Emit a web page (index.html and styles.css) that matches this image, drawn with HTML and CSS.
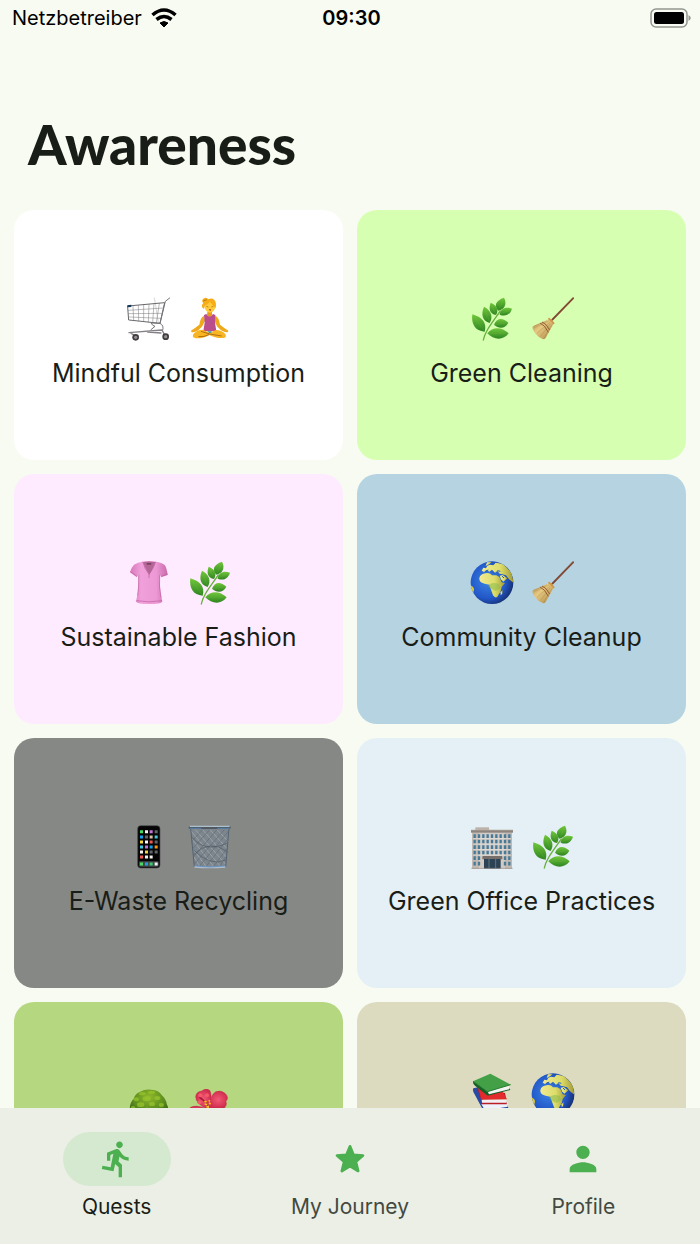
FILE: index.html
```html
<!DOCTYPE html>
<html lang="en">
<head>
	<meta charset="utf-8">
	<meta name="viewport" content="width=device-width, initial-scale=1">
	<title>Awareness</title>
	<link rel="stylesheet" href="styles.css">
</head>
<body>

	<!-- Pictograms shared by several cards -->
	<svg class="sprite" aria-hidden="true">
		<defs>
			<linearGradient id="leafFill" x1="0" y1="0" x2="0" y2="1">
				<stop offset="0" stop-color="#73c83c"/>
				<stop offset="1" stop-color="#2d8420"/>
			</linearGradient>
			<linearGradient id="strawFill" x1="0" y1="0" x2="1" y2="1">
				<stop offset="0" stop-color="#a98343"/>
				<stop offset=".4" stop-color="#e6c982"/>
				<stop offset="1" stop-color="#a9833f"/>
			</linearGradient>
			<radialGradient id="seaFill" cx=".4" cy=".45" r=".6">
				<stop offset="0" stop-color="#3b86e4"/>
				<stop offset=".7" stop-color="#2257c8"/>
				<stop offset="1" stop-color="#173277"/>
			</radialGradient>
			<linearGradient id="landFill" x1="0" y1="0" x2="1" y2="0">
				<stop offset="0" stop-color="#f2ea93"/>
				<stop offset=".6" stop-color="#dcdc69"/>
				<stop offset="1" stop-color="#a19c35"/>
			</linearGradient>
			<linearGradient id="shirtFill" x1="0" y1="0" x2="1" y2="0">
				<stop offset="0" stop-color="#d777bb"/>
				<stop offset=".3" stop-color="#f0a0da"/>
				<stop offset=".7" stop-color="#ec98d4"/>
				<stop offset="1" stop-color="#c869ab"/>
			</linearGradient>
			<radialGradient id="treeFill" cx=".5" cy=".25" r=".7">
				<stop offset="0" stop-color="#8fb92b"/>
				<stop offset=".6" stop-color="#5a8c1d"/>
				<stop offset="1" stop-color="#2c5611"/>
			</radialGradient>
			<radialGradient id="petalFill">
				<stop offset="0" stop-color="#f05a74"/>
				<stop offset="1" stop-color="#d32d50"/>
			</radialGradient>

			<symbol id="herb" viewBox="0 0 132 132">
				<path d="M40 129C44 105 63 82 91 42" fill="none" stroke="#69af3c" stroke-width="4" stroke-linecap="round"/>
				<g fill="url(#leafFill)">
					<path d="M85 41C70 25 78 10 102 2C112 20 104 37 85 41Z"/>
					<path d="M89 53C91 34 107 28 126 35C121 52 107 60 89 53Z"/>
					<path d="M78 54C59 50 55 35 62 17C80 24 88 38 78 54Z"/>
					<path d="M59 78C37 72 32 52 42 29C64 40 70 60 59 78Z"/>
					<path d="M44 104C15 103 3 80 7 52C35 60 52 77 44 104Z"/>
					<path d="M72 83C80 61 99 61 115 77C106 95 87 97 72 83Z"/>
					<path d="M52 109C69 87 96 90 116 109C99 132 71 129 52 109Z"/>
				</g>
				<path d="M85 41L99 12M89 53L117 39M78 54L66 27M59 78L46 40M44 104L15 62M72 83L106 78M52 109L106 108" stroke="#9bd65b" stroke-width="1" opacity=".4"/>
			</symbol>

			<symbol id="broom" viewBox="0 0 132 132">
				<path d="M62 70L126 4" stroke="#7d4530" stroke-width="6" stroke-linecap="round"/>
				<path d="M74 57L126 3" stroke="#a7664a" stroke-width="1"/>
				<path d="M56 66Q62 64 68 75Q69 82 62 91L44 123Q39 130 31 124Q13 116 4 93Q3 88 12 85L43 71Q49 68 56 66Z" fill="url(#strawFill)"/>
				<path d="M33 75Q46 79 56 99M27 78Q41 83 52 106" fill="none" stroke="#965b34" stroke-width="3"/>
				<path d="M54 72L10 92M57 76L18 108M58 80L28 119M63 82L38 125M48 72L7 88" stroke="#8b6b32" stroke-width="1" opacity=".7"/>
				<path d="M54 65L68 79" stroke="#cf9546" stroke-width="5" stroke-linecap="round"/>
			</symbol>

			<symbol id="globe" viewBox="0 0 132 132">
				<clipPath id="globeClip"><circle cx="66" cy="65" r="64"/></clipPath>
				<circle cx="66" cy="65" r="64" fill="url(#seaFill)"/>
				<g clip-path="url(#globeClip)" fill="url(#landFill)">
					<path d="M28 55Q27 45 38 39Q53 34 61 38L66 43L79 43L88 48L95 64L105 66L95 78L92 91L82 107Q76 113 69 103L63 86L58 71L44 68Q30 66 28 55Z"/>
					<path d="M89 44L98 42L112 52L100 62L93 55Z"/>
					<path d="M35 29L40 20L48 22L52 14L60 11L70 13L77 5L100 9L126 36L130 65L117 55L108 43L97 40L89 38L82 30L75 35L66 26L58 32L50 27L42 33Z"/>
					<path d="M51 4L65 3L58 9L47 15Z"/>
					<path d="M92 94L98 87L97 98L92 103Z"/>
					<path d="M0 72Q12 77 12 86L9 98L2 92Z" fill="#dfca32"/>
				</g>
				<path d="M54 75Q63 61 86 68L91 82L77 90L63 83Z" fill="#82b94a" opacity=".5"/>
				<path d="M46 31L55 27M64 31L73 38M82 29L91 31M96 45L102 51" stroke="#2560be" stroke-width="3"/>
			</symbol>
		</defs>
	</svg>

	<header class="status-bar">
		<div class="carrier">
			<span>Netzbetreiber</span>
			<svg class="wifi" viewBox="0 0 26 20" aria-hidden="true">
				<path d="M13 19L9 15Q13 12 17 15Z" stroke="#000"/>
				<path d="M1.5 7Q13-3 24.5 7M5.5 11.5Q13 5.5 20.5 11.5" fill="none" stroke="#000" stroke-width="3.6"/>
			</svg>
		</div>
		<time>09:30</time>
		<svg class="battery" viewBox="0 0 41 20" aria-hidden="true">
			<rect x="1" y="1" width="36" height="18" rx="5" fill="none" stroke="#929690" stroke-width="1.5"/>
			<rect x="4" y="4" width="30" height="12" rx="2.5"/>
			<path d="M38.5 7Q43 10 38.5 13Z" fill="#929690"/>
		</svg>
	</header>

	<main>
		<h1>Awareness</h1>

		<div class="quests">
			<a class="card mindful" href="#mindful">
				<div class="pictograms">
					<svg viewBox="0 0 132 132" aria-hidden="true">
						<g fill="none" stroke-linecap="round" stroke-linejoin="round">
							<path d="M3 27L113 17L99 79L6 69Z" stroke="#68666a" stroke-width="3"/>
							<path d="M18 26L20 70M34 25L35 72M50 23L50 74M66 22L64 76M81 20L77 77M97 19L88 78M4 40L109 33M5 50L107 49M6 60L103 64" stroke="#77757a" stroke-width="1.5"/>
							<path d="M82 3L85 19L94 77" stroke="#858287" stroke-width="1"/>
							<path d="M128 3L115 13L99 79L72 78Q77 87 84 88L72 98M99 79Q112 85 107 100" stroke="#77737a" stroke-width="3"/>
							<path d="M6 107L105 99L112 112M12 109L28 118M62 105L102 108" stroke="#848087" stroke-width="4"/>
						</g>
						<circle cx="26" cy="121" r="10" fill="#3f3b3e"/>
						<circle cx="116" cy="119" r="10" fill="#3f3b3e"/>
						<circle cx="26" cy="121" r="5" fill="#938f92"/>
						<circle cx="116" cy="119" r="5" fill="#938f92"/>
						<path d="M1 25L13 23L13 30L2 31Z" fill="#173958"/>
					</svg>
					<svg viewBox="0 0 132 132" aria-hidden="true">
						<path d="M48 56Q37 61 34 83L16 97Q7 100 10 105Q25 109 43 88L51 71Z" fill="#efa91d"/>
						<path d="M82 56Q93 61 96 83L114 97Q123 100 120 105Q105 109 87 88L79 71Z" fill="#efa91d"/>
						<path d="M59 40H72V54L65 64L57 54Z" fill="#e79a1b"/>
						<path d="M48 54L55 51Q64 67 75 51L82 54L81 77L85 102H46L50 77Z" fill="#ba4d8c"/>
						<ellipse cx="66" cy="26" rx="17" ry="21" fill="#ffcb3b"/>
						<path d="M48 36Q36 28 46 19Q38 9 49 3Q56 0 61 7Q77-1 83 16Q85 28 82 33Q74 25 66 14Q58 24 50 26Z" fill="#f6ad17"/>
						<path d="M45 12L57 8M55 28L61 30M70 30L76 28" stroke="#9d651b" stroke-width="2"/>
						<path d="M62 38Q66 36 70 38L67 41Z" fill="#8c261b"/>
						<path d="M44 98Q28 98 19 108Q8 120 23 124Q47 125 64 114Q83 125 108 123Q120 119 108 107Q98 98 84 99L65 107Z" fill="#f8b523"/>
						<path d="M39 103L65 111L101 117M65 112Q48 121 31 119" fill="none" stroke="#b27013" stroke-width="3"/>
						<path d="M57 103H73L66 109Z" fill="#2d8fad"/>
					</svg>
				</div>
				<h2>Mindful Consumption</h2>
			</a>

			<a class="card cleaning" href="#cleaning">
				<div class="pictograms">
					<svg aria-hidden="true"><use href="#herb"/></svg>
					<svg aria-hidden="true"><use href="#broom"/></svg>
				</div>
				<h2>Green Cleaning</h2>
			</a>

			<a class="card fashion" href="#fashion">
				<div class="pictograms">
					<svg viewBox="0 0 132 132" aria-hidden="true">
						<path d="M47 2Q66-2 86 2Q105 5 113 12Q119 20 122 42L103 49L99 42Q96 83 106 122Q102 129 67 129Q31 129 27 122Q37 83 34 42L29 49L9 34Q13 19 21 11Q32 4 47 2Z" fill="url(#shirtFill)"/>
						<path d="M48 3Q66 0 85 3Q79 22 67 41Q54 22 48 3Z" fill="#b36796"/>
						<path d="M47 2Q53 24 66 40V51M86 2Q80 23 66 40M10 32L30 46M122 39L102 46M28 119Q65 126 105 119M35 43Q36 77 32 104M98 43Q95 78 102 109" fill="none" stroke="#bd5d9f" stroke-width="2"/>
						<rect x="59" y="6" width="14" height="5" rx="1" fill="#7b4162"/>
					</svg>
					<svg aria-hidden="true"><use href="#herb"/></svg>
				</div>
				<h2>Sustainable Fashion</h2>
			</a>

			<a class="card community" href="#community">
				<div class="pictograms">
					<svg aria-hidden="true"><use href="#globe"/></svg>
					<svg aria-hidden="true"><use href="#broom"/></svg>
				</div>
				<h2>Community Cleanup</h2>
			</a>

			<a class="card e-waste" href="#e-waste">
				<div class="pictograms">
					<svg viewBox="0 0 132 132" aria-hidden="true">
						<rect x="32" y="2" width="67" height="127" rx="9" fill="#050506" stroke="#4c4c4d" stroke-width="2"/>
						<rect x="36" y="109" width="59" height="16" rx="4" fill="#454b4c"/>
						<g stroke-width="9" fill="none">
							<path d="M39 20h9M39 117h9" stroke="#49db62"/>
							<path d="M54 20h9M39 81h9M54 96h9M68 96h9M83 117h9" stroke="#f5f1f1"/>
							<path d="M68 20h9M54 66h9" stroke="#c873dd"/>
							<path d="M83 20h9M83 51h9M83 81h9M54 36h9M68 81h9" stroke="#606568"/>
							<path d="M39 36h9M68 66h9M54 117h9" stroke="#199fe8"/>
							<path d="M68 36h9" stroke="#d9bf9e"/>
							<path d="M83 36h9M39 66h9" stroke="#43c8df"/>
							<path d="M39 51h9M54 81h9" stroke="#f2d642"/>
							<path d="M54 51h9" stroke="#fff"/>
							<path d="M68 51h9M39 96h9" stroke="#ee5850"/>
							<path d="M83 66h9" stroke="#ff9800"/>
							<path d="M68 117h9" stroke="#39c873"/>
						</g>
					</svg>
					<svg viewBox="0 0 132 132" aria-hidden="true">
						<path d="M8 10H123L113 127H19Z" fill="#7d858d"/>
						<g fill="none" stroke="#a9b0b8" stroke-width="2">
							<path d="M9 18L98 125M22 14L112 117M43 13L115 96M65 13L118 72M86 13L121 50M12 42L78 126M14 70L56 127M17 95L38 127"/>
							<path d="M122 18L33 125M109 14L19 117M88 13L16 96M66 13L13 72M45 13L10 50M119 42L53 126M117 70L75 127M114 95L93 127" stroke="#626a76"/>
						</g>
						<path d="M10 35Q50 85 116 55M17 89Q65 40 119 81M14 72Q66 127 114 105" fill="none" stroke="#505962" stroke-width="2"/>
						<path d="M8 10L19 126M123 10L113 126" stroke="#536473" stroke-width="3"/>
						<path d="M20 122Q65 128 112 122V128Q65 132 19 128Z" fill="#b1bcc8"/>
						<path d="M20 123Q65 129 112 123" fill="none" stroke="#4d8bd0" stroke-width="2"/>
						<rect x="2" y="3" width="126" height="9" rx="4" fill="#505962"/>
						<path d="M5 4H125" stroke="#c3d5e4" stroke-width="3"/>
						<path d="M5 10H40M88 10H125" stroke="#5f98d1" stroke-width="2"/>
					</svg>
				</div>
				<h2>E-Waste Recycling</h2>
			</a>

			<a class="card office" href="#office">
				<div class="pictograms">
					<svg viewBox="0 0 132 132" aria-hidden="true">
						<rect x="16" y="7" width="41" height="10" fill="#bbb2aa"/>
						<rect x="6" y="20" width="120" height="111" fill="#d2cbc5"/>
						<path d="M6 24H27V131H6ZM105 24H126V131H105Z" fill="#c1b9b3"/>
						<rect x="3" y="15" width="126" height="8" fill="#8d847e"/>
						<path d="M3 15H129" stroke="#bcb3aa" stroke-width="2"/>
						<!-- one dash per window, one line per column -->
						<g stroke="#477998" stroke-width="7" stroke-dasharray="11 5.5">
							<path d="M14 28V122M27 28V122M40 28V94M53 28V94M66 28V94M79 28V94M92 28V94M105 28V122M118 28V122"/>
						</g>
						<path d="M10 41H122M10 57H122M10 74H122M10 90H122" stroke="#eee8e1" stroke-width="2"/>
						<rect x="37" y="93" width="60" height="10" rx="2" fill="#756e6a"/>
						<rect x="42" y="102" width="50" height="29" fill="#2b4354"/>
						<path d="M57 102V130M77 102V130" stroke="#7894a4" stroke-width="2"/>
						<path d="M4 130H128" stroke="#978d85" stroke-width="2"/>
					</svg>
					<svg aria-hidden="true"><use href="#herb"/></svg>
				</div>
				<h2>Green Office Practices</h2>
			</a>

			<a class="card garden" href="#garden" aria-label="Garden">
				<div class="pictograms">
					<svg viewBox="0 0 132 132" aria-hidden="true">
						<path d="M56 77H77L83 131H49Z" fill="#775032"/>
						<path d="M8 61Q9 39 20 29Q25 13 40 8Q56-2 79 3Q95 5 104 18Q118 31 119 45Q128 61 120 75Q108 93 86 88Q65 99 45 89Q21 93 11 77Z" fill="url(#treeFill)"/>
						<g fill="#9bc62d" opacity=".7">
							<ellipse cx="46" cy="14" rx="10" ry="5"/>
							<ellipse cx="74" cy="10" rx="11" ry="5"/>
							<ellipse cx="28" cy="31" rx="8" ry="6"/>
							<ellipse cx="59" cy="29" rx="12" ry="7"/>
							<ellipse cx="91" cy="27" rx="9" ry="6"/>
							<ellipse cx="41" cy="47" rx="11" ry="7"/>
							<ellipse cx="75" cy="45" rx="9" ry="6"/>
							<ellipse cx="103" cy="48" rx="8" ry="6"/>
							<ellipse cx="18" cy="56" rx="7" ry="5"/>
							<ellipse cx="60" cy="63" rx="11" ry="7"/>
						</g>
					</svg>
					<svg viewBox="0 0 132 132" aria-hidden="true">
						<g fill="url(#petalFill)" stroke="#b72442" stroke-width="1">
							<path d="M59 67Q24 96 5 76Q-5 64 6 56Q21 45 59 60Z"/>
							<path d="M56 60Q21 42 23 21Q26 7 41 6Q52-4 64 3Q71 10 69 34Z"/>
							<path d="M62 58Q66 18 83 8Q99 2 111 13Q125 25 114 37Q119 52 105 57Z"/>
							<path d="M63 61Q104 46 119 61Q127 77 116 92Q105 109 87 99Z"/>
							<path d="M61 65Q90 102 72 121Q56 132 42 118Q28 105 47 83Z"/>
						</g>
						<path d="M61 69L55 41L34 24" fill="none" stroke="#a91737" stroke-width="5"/>
						<path d="M49 37l7 2m6-5l4 3m-16 8l8 2m5-5l5 3m-13 8l8 1m-8 6l8-3" stroke="#f7c51d" stroke-width="5"/>
						<g fill="#f35b68">
							<circle cx="37" cy="19" r="6"/>
							<circle cx="57" cy="19" r="6"/>
							<circle cx="34" cy="40" r="6"/>
						</g>
					</svg>
				</div>
				<h2></h2>
			</a>

			<a class="card learning" href="#learning" aria-label="Learning">
				<div class="pictograms">
					<svg viewBox="0 0 132 132" aria-hidden="true">
						<path d="M10 46Q6 54 15 66L45 122L116 108L112 96L46 105L24 43Z" fill="#284aa4"/>
						<path d="M34 94L113 88V101L46 113Z" fill="#edf2fd"/>
						<path d="M25 42Q22 53 29 66L37 94L111 94L109 87L37 84L37 76L109 78L105 60Z" fill="#bb1f26"/>
						<path d="M35 80H109V89H36Z" fill="#f0f0f4"/>
						<path d="M25 42L98 57L111 79L34 80Z" fill="#e32a2d"/>
						<path d="M9 25Q8 33 16 39L53 68L121 51L119 46L57 59L19 28Z" fill="#165e24"/>
						<path d="M52 53L118 39V49L57 64Z" fill="#f1f4f2"/>
						<path d="M9 25L61 2L122 35L52 56Z" fill="#43a046"/>
						<path d="M9 25L52 56L122 35" fill="none" stroke="#257d31" stroke-width="3"/>
					</svg>
					<svg aria-hidden="true"><use href="#globe"/></svg>
				</div>
				<h2 class="two-lines"></h2>
			</a>
		</div>
	</main>

	<nav>
		<a class="active" href="#quests">
			<span class="tab-icon">
				<svg viewBox="0 0 24 24" aria-hidden="true"><path d="M13.49 5.48c1.1 0 2-.9 2-2s-.9-2-2-2-2 .9-2 2 .9 2 2 2zm-3.6 13.9l1-4.4 2.1 2v6h2v-7.5l-2.1-2 .6-3c1.3 1.5 3.3 2.5 5.5 2.5v-2c-1.9 0-3.5-1-4.3-2.4l-1-1.6c-.4-.6-1-1-1.7-1-.3 0-.5.1-.8.1l-5.2 2.2v4.7h2v-3.4l1.8-.7-1.6 8.1-4.9-1-.4 2 7 1.4z"/></svg>
			</span>
			Quests
		</a>
		<a href="#journey">
			<span class="tab-icon">
				<svg viewBox="0 0 24 24" aria-hidden="true"><path d="M12 4.4L14.1 9.5L19.8 9.9L15.5 13.6L16.9 19.2L12 16.2L7.1 19.2L8.5 13.6L4.2 9.9L9.9 9.5Z" stroke="#4caf50" stroke-width="1.6" stroke-linejoin="round"/></svg>
			</span>
			My Journey
		</a>
		<a href="#profile">
			<span class="tab-icon">
				<svg viewBox="0 0 24 24" aria-hidden="true"><path d="M12 12c2.21 0 4-1.79 4-4s-1.79-4-4-4-4 1.79-4 4 1.79 4 4 4zm0 2c-2.67 0-8 1.34-8 4v2h16v-2c0-2.66-5.33-4-8-4z"/></svg>
			</span>
			Profile
		</a>
	</nav>

</body>
</html>
```
FILE: styles.css
```css
* {
	box-sizing: border-box;
}

body {
	display: flex;
	flex-direction: column;
	height: 100vh;
	margin: 0;
	background-color: #f8fbf1;
	color: #191d17;
	font-family: Inter, "Liberation Sans", sans-serif;
}

a {
	color: inherit;
	text-decoration: none;
}

.sprite {
	position: absolute;
	width: 0;
	height: 0;
}

/* Status bar */
.status-bar {
	display: grid;
	grid-template-columns: 1fr auto 1fr;
	align-items: center;
	flex: none;
	padding: 6px 9px 0 12px;
	color: #000;
	font-size: 20px;
	line-height: 24px;
}

.carrier {
	display: flex;
	align-items: center;
	gap: 9px;
}

.wifi {
	width: 26px;
	height: 20px;
}

.status-bar time {
	font-weight: 600;
}

.battery {
	justify-self: end;
	width: 41px;
	height: 20px;
}

/* Scrolling list of quests */
main {
	flex: 1;
	min-height: 0;
	padding: 84px 14px 0;
	overflow: hidden auto;
	scrollbar-width: none;
}

h1 {
	margin: 0 14px 36px;
	font-family: Lato, sans-serif;
	font-size: 55px;
	font-weight: 900;
	line-height: 60px;
}

.quests {
	display: grid;
	grid-template-columns: 1fr 1fr;
	gap: 14px;
	padding-bottom: 14px;
}

.card {
	display: flex;
	flex-direction: column;
	align-items: center;
	justify-content: center;
	min-height: 250px;
	border-radius: 20px;
}

.pictograms {
	display: flex;
	gap: 17px;
	padding: 16px 0 16px 2px;
}

.pictograms svg {
	display: block;
	width: 44px;
	height: 44px;
}

.card h2 {
	min-height: 32px;
	margin: 0;
	font-size: 25px;
	font-weight: 400;
	line-height: 32px;
	text-align: center;
}

.card .two-lines {
	min-height: 64px;
}

.mindful { background-color: #fff; }
.cleaning { background-color: #d7ffb2; }
.fashion { background-color: #ffebff; }
.community { background-color: #b5d3e1; }
.e-waste { background-color: #868886; }
.office { background-color: #e4f0f5; }
.garden { background-color: #b5d780; }
.learning { background-color: #dcdbc0; }

/* Bottom tabs */
nav {
	display: flex;
	flex: none;
	padding: 24px 0;
	background-color: #ebefe5;
}

nav a {
	display: flex;
	flex: 1;
	flex-direction: column;
	align-items: center;
	gap: 8px;
	color: #434941;
	font-size: 21px;
	line-height: 26px;
}

nav .active {
	color: #191d17;
}

.tab-icon {
	display: flex;
	align-items: center;
	justify-content: center;
	width: 108px;
	height: 54px;
	border-radius: 27px;
}

.active .tab-icon {
	background-color: #d5e8d0;
}

.tab-icon svg {
	width: 40px;
	height: 40px;
	fill: #4caf50;
}
```
